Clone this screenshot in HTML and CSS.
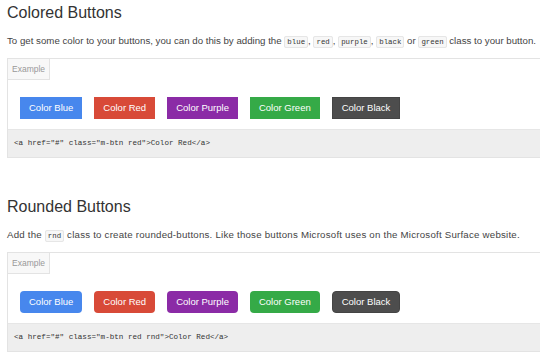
FILE: index.html
```html
<!DOCTYPE html>
<html lang="en">
<head>
    <meta charset="UTF-8">
    <title>Buttons</title>
    <link rel="stylesheet" href="styles.css">
</head>
<body>
<div class="page">
    <section class="section">
        <h2>Colored Buttons</h2>
        <p>To get some color to your buttons, you can do this by adding the <code>blue</code>, <code>red</code>, <code>purple</code>, <code>black</code> or <code>green</code> class to your button.</p>
        <div class="example-box">
            <div class="example-label">Example</div>
            <div class="button-row">
                <a href="#" class="m-btn blue">Color Blue</a>
                <a href="#" class="m-btn red">Color Red</a>
                <a href="#" class="m-btn purple">Color Purple</a>
                <a href="#" class="m-btn green">Color Green</a>
                <a href="#" class="m-btn black">Color Black</a>
            </div>
            <pre class="snippet">&lt;a href="#" class="m-btn red"&gt;Color Red&lt;/a&gt;</pre>
        </div>
    </section>

    <section class="section">
        <h2>Rounded Buttons</h2>
        <p class="loose">Add the <code>rnd</code> class to create rounded-buttons. Like those buttons Microsoft uses on the Microsoft Surface website.</p>
        <div class="example-box">
            <div class="example-label">Example</div>
            <div class="button-row">
                <a href="#" class="m-btn blue rnd">Color Blue</a>
                <a href="#" class="m-btn red rnd">Color Red</a>
                <a href="#" class="m-btn purple rnd">Color Purple</a>
                <a href="#" class="m-btn green rnd">Color Green</a>
                <a href="#" class="m-btn black rnd">Color Black</a>
            </div>
            <pre class="snippet">&lt;a href="#" class="m-btn red rnd"&gt;Color Red&lt;/a&gt;</pre>
        </div>
    </section>
</div>
</body>
</html>
```

FILE: styles.css
```css
:root {
    --text: #333333;
    --line: #e3e3e3;
    --code-bg: #eeeeee;
}

html, body {
    margin: 0;
    padding: 0;
    overflow: hidden;
    background: #ffffff;
}

body {
    font-family: 'Liberation Sans', Arial, sans-serif;
    color: var(--text);
}

.page {
    width: 660px;
    padding-left: 7px;
}

.section {
    padding-top: 3px;
    margin-bottom: 36px;
}

h2 {
    margin: 0;
    font-size: 16px;
    line-height: 20px;
    font-weight: 400;
    color: #333;
}

p {
    margin: 10px 0 8px;
    font-size: 9.7px;
    line-height: 16px;
    color: #444;
    white-space: nowrap;
}

p.loose {
    letter-spacing: 0.22px;
}

code {
    font-family: 'Liberation Mono', 'Courier New', monospace;
    font-size: 7.4px;
    letter-spacing: 0;
    padding: 1px 2px;
    background: #f7f7f7;
    border: 1px solid #e6e6e6;
    border-radius: 2px;
    color: #333;
}

.example-box {
    border: 1px solid var(--line);
    border-right: none;
}

.example-label {
    display: inline-block;
    height: 20px;
    line-height: 20px;
    padding: 0 4px;
    font-size: 8.5px;
    color: #999;
    background: #f8f8f8;
    border-right: 1px solid var(--line);
    border-bottom: 1px solid var(--line);
    vertical-align: top;
}

.button-row {
    display: flex;
    gap: 12px;
    padding: 17px 12px 10px;
}

.m-btn {
    display: inline-block;
    height: 22px;
    line-height: 22px;
    padding: 0 9px;
    font-size: 9.5px;
    color: #ffffff;
    text-decoration: none;
    white-space: nowrap;
}

.m-btn.blue { background: #4787ed; }
.m-btn.red { background: #d84a38; }
.m-btn.purple { background: #8b2ba6; }
.m-btn.green { background: #35aa47; }
.m-btn.black { background: #4d4d4d; border: 1px solid #444; height: 20px; line-height: 20px; }

.m-btn.rnd {
    border-radius: 4px;
}

.snippet {
    margin: 0;
    height: 27px;
    line-height: 27px;
    padding: 0 6px;
    background: var(--code-bg);
    border-top: 1px solid #e6e6e6;
    font-family: 'Liberation Mono', 'Courier New', monospace;
    font-size: 7.6px;
    color: #333;
}
```
